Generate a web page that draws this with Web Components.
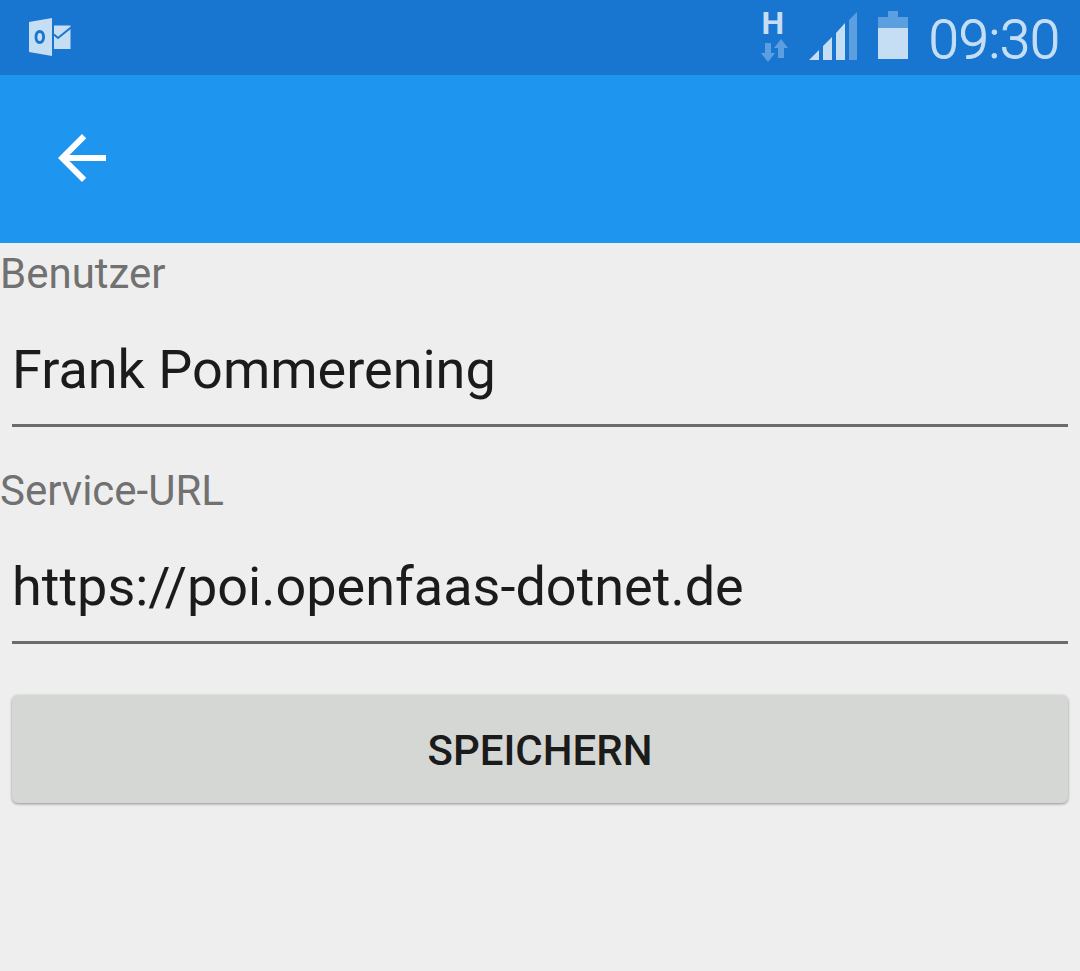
<!DOCTYPE html>
<html lang="de">
<head>
<meta charset="utf-8">
<meta name="viewport" content="width=device-width, initial-scale=1">
<title>Einstellungen</title>
<style>
html, body { margin: 0; min-height: 100%; background: #eee; font-family: Roboto, sans-serif; color: #1b1b1b; }
</style>
</head>
<body>
<settings-page></settings-page>
<script>
const define = (name, html) => customElements.define(name, class extends HTMLElement {
  constructor() {
    super();
    this.attachShadow({ mode: 'open' }).innerHTML = html;
  }
});

define('status-bar', `
<style>
:host { display: flex; justify-content: space-between; align-items: flex-start; height: 75px; padding: 0 20px 0 28px; box-sizing: border-box; background: #1976d0; color: #c6def4; }
svg { display: block; }
.mail { margin-top: 17px; }
.right { display: flex; align-items: flex-start; }
.net { width: 28px; display: flex; flex-direction: column; align-items: center; margin-right: 21px; padding-top: 5px; }
.net span { font-size: 32px; line-height: 36px; font-weight: 700; margin-right: 2px; }
.net svg { margin-top: -2px; }
.signal { margin: 12px 20px 0 0; }
.battery { margin: 11px 20px 0 0; }
time { font-size: 54px; line-height: 64px; font-weight: 300; -webkit-text-stroke: 1px currentColor; padding-top: 8px; }
</style>
<svg class="mail" width="44" height="40" viewBox="0 0 44 40" role="img" aria-label="Outlook">
  <path fill="currentColor" fill-rule="evenodd" d="M1 5 24 1V39L1 35ZM11.700 13C8.500 13 6.600 16 6.600 20S8.500 27 11.700 27 17 24 17 20 15 13 11.700 13ZM11.700 16C13.500 16 14.200 17.700 14.200 20S13.500 24 11.700 24 9.400 22.300 9.400 20 10 16 11.700 16Z"/>
  <path fill="currentColor" d="M26 8.500H42.500V32H26Z"/>
  <path d="M26 17.500 30 21 43 10.500" fill="none" stroke="#1976d0" stroke-width="2"/>
</svg>
<div class="right">
  <div class="net"><span>H</span>
    <svg width="28" height="24" viewBox="0 0 28 24" fill="#5c9fe0" aria-hidden="true"><path d="M5 4H11V14H15L8 23 1 14H5Z"/><path d="M21 0 28 9H24V19H18V9H14Z"/></svg>
  </div>
  <svg class="signal" width="48" height="48" viewBox="0 0 48 48" fill="currentColor" aria-hidden="true"><path d="M0 48 10 38V48ZM14 34 23 25V48H14ZM27 21 36 11V48H27Z"/><path fill="#5c9fe0" d="M40 8 48 0V48H40Z"/></svg>
  <svg class="battery" width="32" height="49" viewBox="0 0 32 49" aria-hidden="true"><path fill="#5c9fe0" d="M1 6H11V0H21V6H31V17H1Z"/><path fill="currentColor" d="M1 17H31V48H1Z"/></svg>
  <time>09:30</time>
</div>`);

define('app-bar', `
<style>
:host { display: flex; align-items: center; height: 168px; padding: 0 46px 2px; box-sizing: border-box; background: #1e95ef; }
button { display: block; width: 72px; height: 72px; padding: 0; border: 0; background: none; color: #fff; }
svg { display: block; }
</style>
<button type="button" aria-label="Zurück"><svg width="72" height="72" viewBox="0 0 24 24" fill="currentColor"><path d="M20 11H7.830l5.590-5.590L12 4l-8 8 8 8 1.410-1.410L7.830 13H20v-2z"/></svg></button>`);

customElements.define('text-field', class extends HTMLElement {
  constructor() {
    super();
    this.attachShadow({ mode: 'open' }).innerHTML = `
<style>
:host { display: block; padding-bottom: 33px; }
label { display: block; padding-top: 4px; font-size: 42px; line-height: 53px; color: #717171; }
.box { padding: 0 12px; }
input { display: block; box-sizing: border-box; width: 100%; height: 127px; padding: 37px 0 23px; border: 0; border-bottom: 3px solid #6b6b6b; border-radius: 0; outline: 0; background: none; color: #1b1b1b; font-family: inherit; font-size: 54px; line-height: 64px; }
</style>
<label for="field"><slot></slot></label>
<div class="box"><input id="field"></div>`;
    const input = this.shadowRoot.querySelector('input');
    input.type = this.getAttribute('type') || 'text';
    input.value = this.getAttribute('value') || '';
  }
});

define('raised-button', `
<style>
:host { display: block; padding: 18px 12px; }
button { display: block; width: 100%; height: 108px; padding: 4px 0 0; border: 0; border-radius: 6px; background: #d5d7d4; box-shadow: 0 1px 3px rgba(0,0,0,.4); color: #1b1b1b; font-family: inherit; font-size: 42px; line-height: 50px; font-weight: 500; text-transform: uppercase; }
</style>
<button type="button"><slot></slot></button>`);

define('settings-page', `
<style>
:host { display: block; }
</style>
<header><status-bar></status-bar><app-bar></app-bar></header>
<main>
  <text-field value="Frank Pommerening">Benutzer</text-field>
  <text-field type="url" value="https://poi.openfaas-dotnet.de">Service-URL</text-field>
  <raised-button>Speichern</raised-button>
</main>`);
</script>
</body>
</html>
